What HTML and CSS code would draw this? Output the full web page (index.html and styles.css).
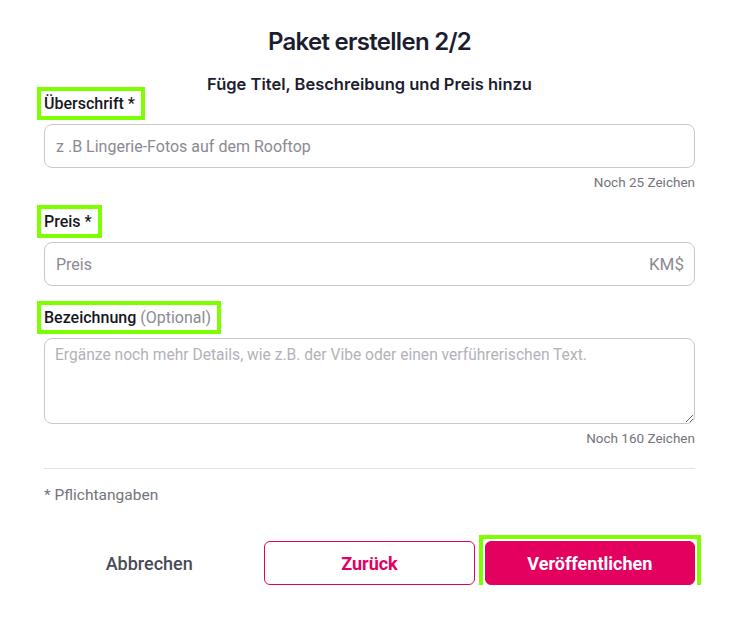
FILE: index.html
```html
<!DOCTYPE html>
<html lang="de">
<head>
  <meta charset="UTF-8" />
  <meta name="viewport" content="width=device-width, initial-scale=1.0" />
  <title>Paket erstellen</title>
  <link rel="stylesheet" href="styles.css">
</head>
<body>
  <div class="modal">
    <h1>Paket erstellen 2/2</h1>
    <p class="subtitle">Füge Titel, Beschreibung und Preis hinzu</p>

    <form class="package-form">
      <div class="field">
        <label class="field-label marked" for="title">Überschrift *</label>
        <input type="text" id="title" class="field-input" placeholder="z .B Lingerie-Fotos auf dem Rooftop" />
        <span class="counter">Noch 25 Zeichen</span>
      </div>

      <div class="field">
        <label class="field-label marked" for="price">Preis *</label>
        <div class="input-wrap">
          <input type="text" id="price" class="field-input" placeholder="Preis" />
          <span class="currency">KM$</span>
        </div>
      </div>

      <div class="field">
        <label class="field-label marked" for="description">Bezeichnung <span class="optional">(Optional)</span></label>
        <textarea id="description" class="field-input field-area" placeholder="Ergänze noch mehr Details, wie z.B. der Vibe oder einen verführerischen Text."></textarea>
        <span class="counter">Noch 160 Zeichen</span>
      </div>

      <hr class="divider" />
      <p class="required-note">* Pflichtangaben</p>

      <div class="actions">
        <button type="button" class="btn btn-plain">Abbrechen</button>
        <button type="button" class="btn btn-outline">Zurück</button>
        <div class="btn-frame marked">
          <button type="submit" class="btn btn-primary">Veröffentlichen</button>
        </div>
      </div>
    </form>
  </div>
</body>
</html>
```

FILE: styles.css
```css
:root {
  --primary-color: #e3005f;
  --text-color: #1d1d30;
  --label-color: #17171f;
  --muted-color: #75747c;
  --placeholder-color: #8b8a93;
  --border-color: #c9c8ce;
  --mark-color: #7dff00;
}

* {
  box-sizing: border-box;
  margin: 0;
  padding: 0;
}

body {
  font-family: Roboto, 'Noto Sans', sans-serif;
  background: #ffffff;
  color: var(--text-color);
}

.modal {
  padding: 26px 51px 0 44px;
}

h1 {
  font-family: Inter, sans-serif;
  font-size: 24px;
  font-weight: 600;
  text-align: center;
  line-height: 32px;
  letter-spacing: -0.03em;
}

.subtitle {
  font-family: Inter, sans-serif;
  font-size: 16.5px;
  font-weight: 600;
  text-align: center;
  line-height: 20px;
  margin-top: 16px;
}

.field {
  display: flex;
  flex-direction: column;
}

.field + .field {
  margin-top: 22px;
}

.field-label {
  align-self: flex-start;
  padding-right: 3px;
  font-size: 16px;
  font-weight: 500;
  line-height: 19px;
  color: var(--label-color);
  margin-bottom: 11px;
}

.optional {
  font-weight: 400;
  color: var(--placeholder-color);
}

/* bright outline around the highlighted elements */
.marked {
  outline: 4px solid var(--mark-color);
  outline-offset: 3px;
}

.field-input {
  width: 100%;
  height: 44px;
  padding: 0 11px;
  border: 1px solid var(--border-color);
  border-radius: 8px;
  font-family: Roboto, sans-serif;
  font-size: 16px;
  color: var(--label-color);
  background: #ffffff;
}

.field-input::placeholder {
  color: var(--placeholder-color);
}

.field-input:focus {
  outline: none;
  border-color: var(--primary-color);
}

.field-area {
  height: 86px;
  padding: 7px 10px;
  font-size: 15.6px;
  resize: vertical;
  line-height: 19px;
}

.field-area::placeholder {
  color: #b3b2b9;
}

.input-wrap {
  position: relative;
}

.currency {
  position: absolute;
  right: 11px;
  top: 50%;
  transform: translateY(-50%);
  font-size: 17px;
  color: var(--placeholder-color);
}

.counter {
  align-self: flex-end;
  margin-top: 6px;
  font-size: 13.5px;
  line-height: 16px;
  color: var(--muted-color);
}

.divider {
  border: none;
  border-top: 1px solid #e2def4;
  margin-top: 22px;
}

.required-note {
  margin-top: 17px;
  font-size: 15.5px;
  line-height: 18px;
  color: var(--muted-color);
}

.actions {
  display: grid;
  grid-template-columns: repeat(3, 1fr);
  gap: 10px;
  margin-top: 37px;
}

.btn {
  width: 100%;
  height: 44px;
  border-radius: 6px;
  font-family: Roboto, sans-serif;
  font-size: 18px;
  font-weight: 700;
  cursor: pointer;
  background: transparent;
  border: 1px solid transparent;
}

.btn-frame.marked {
  outline-offset: 2px;
}

.btn-plain {
  color: #4a4b58;
  font-weight: 500;
}

.btn-outline {
  color: var(--primary-color);
  border-color: var(--primary-color);
  background: #ffffff;
}

.btn-primary {
  display: block;
  color: #ffffff;
  background: var(--primary-color);
  border-color: var(--primary-color);
}
```
